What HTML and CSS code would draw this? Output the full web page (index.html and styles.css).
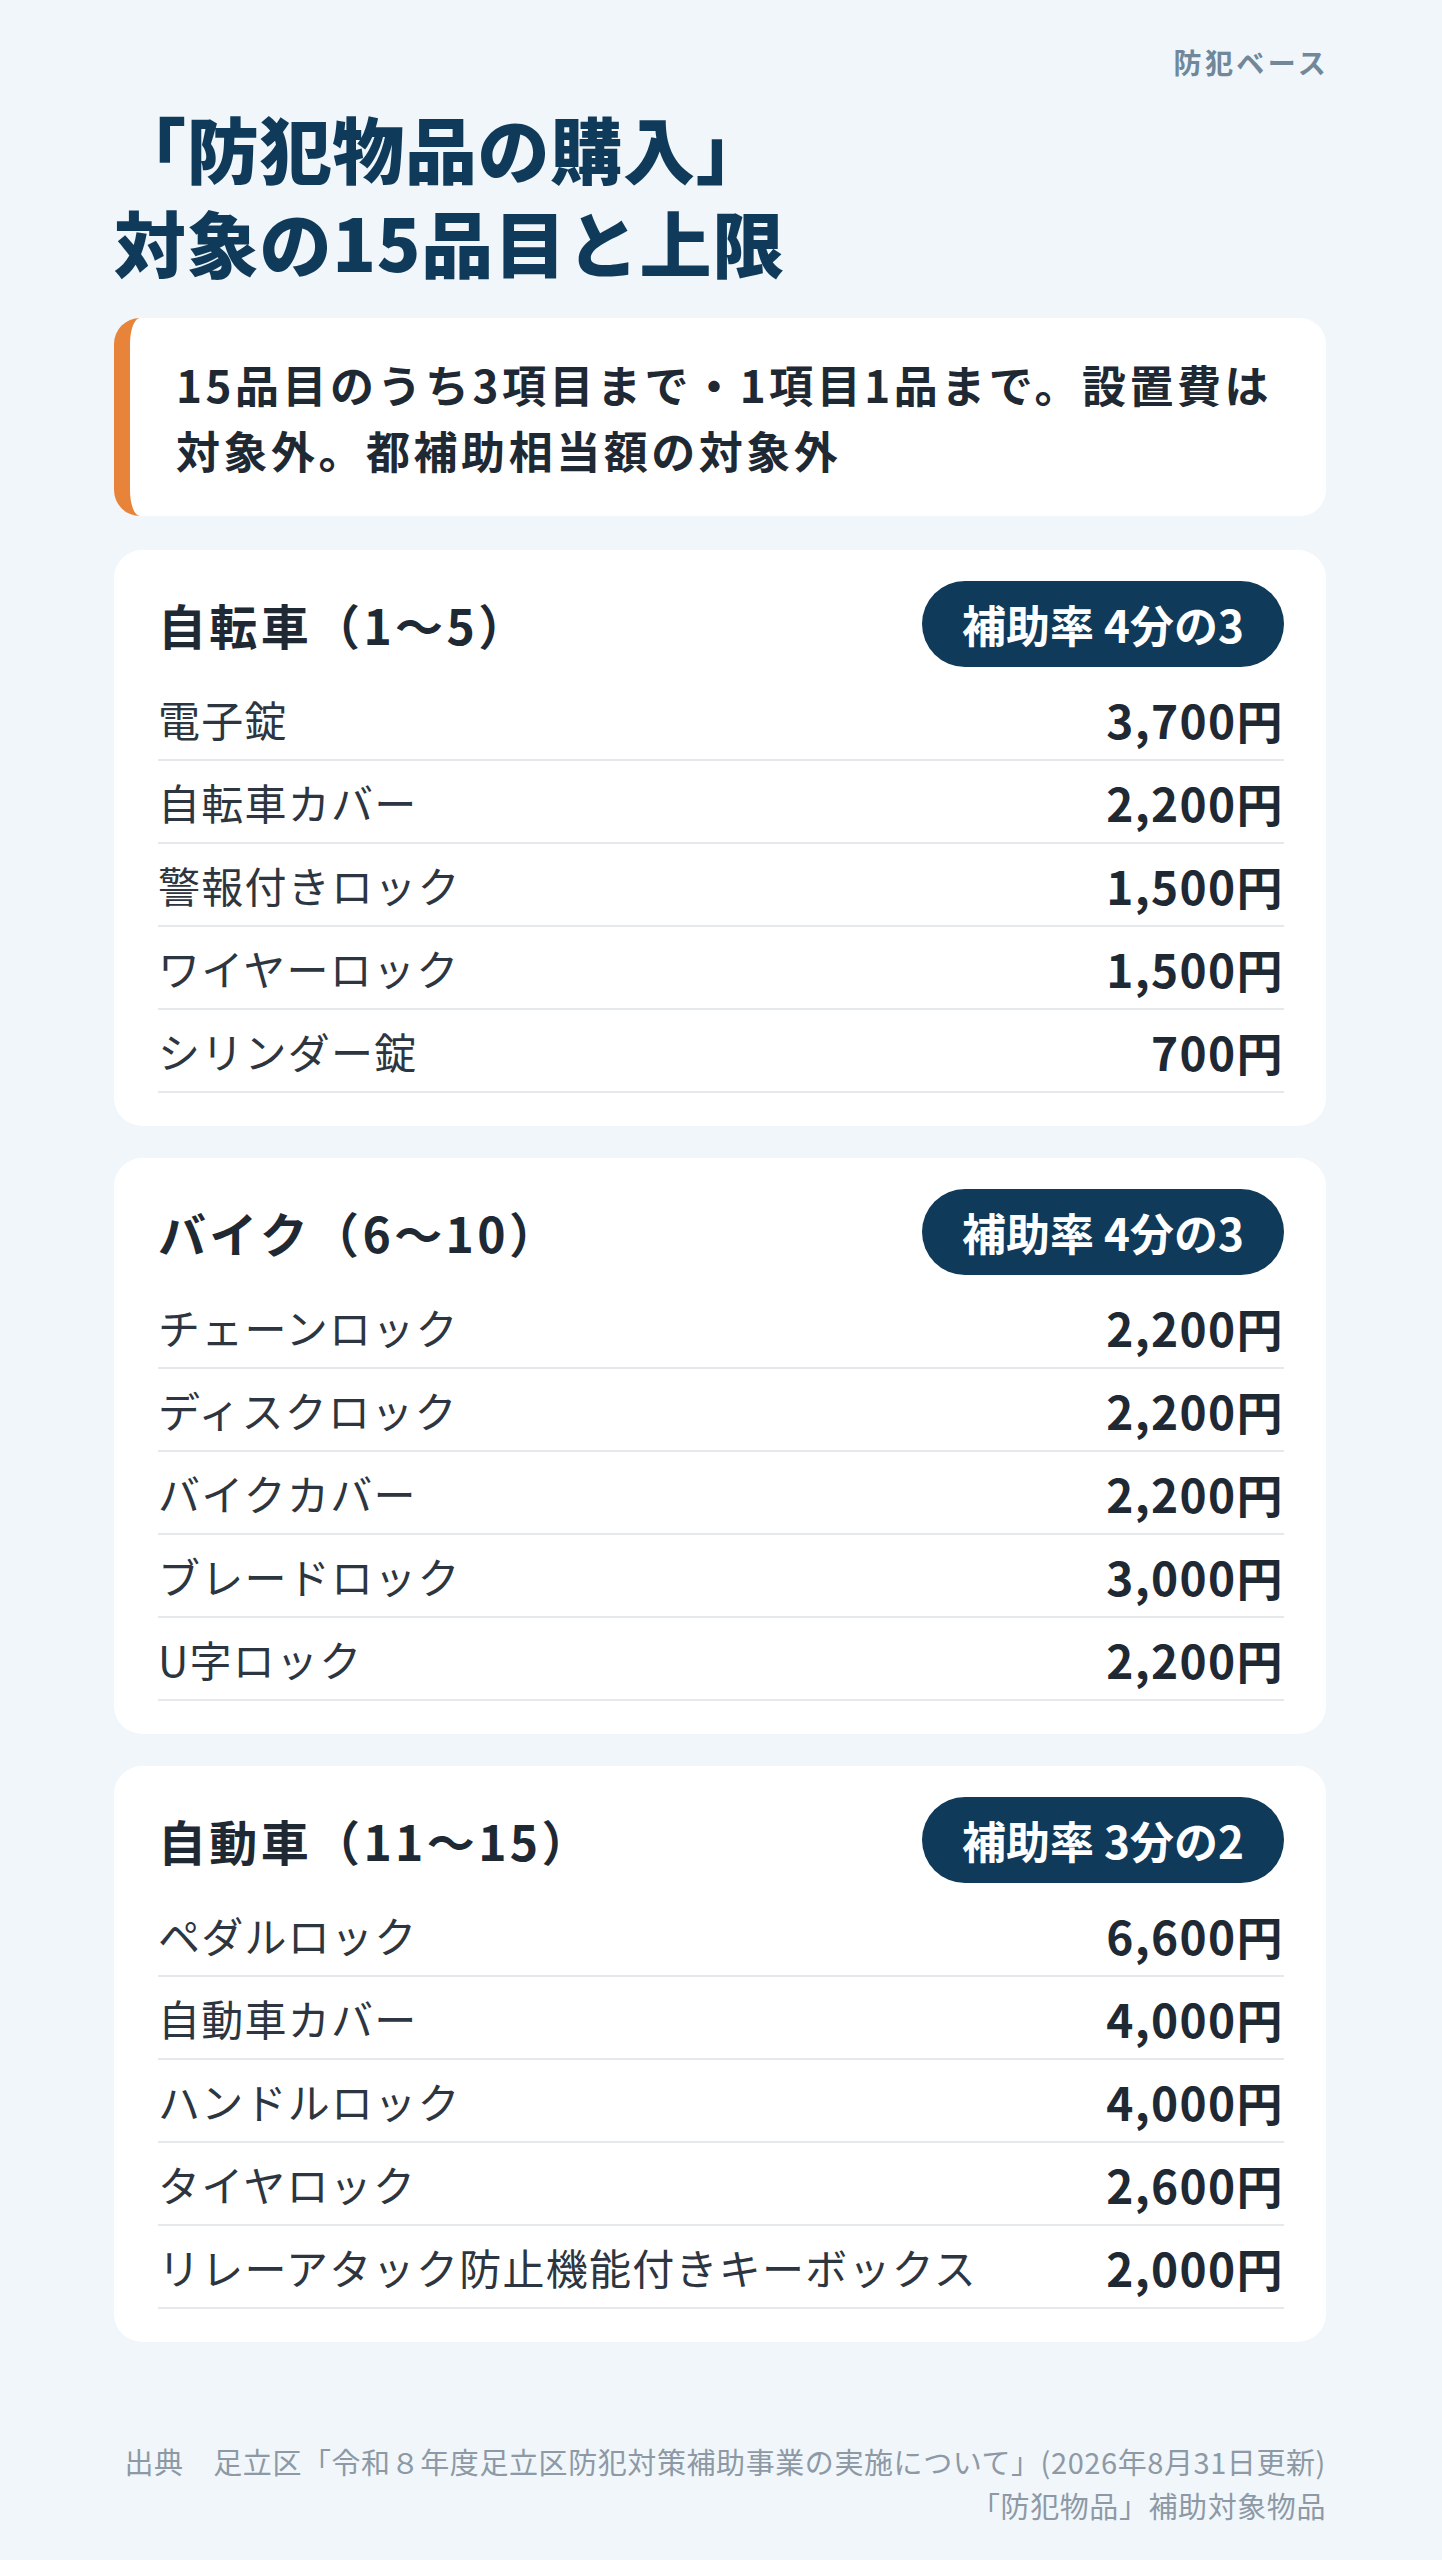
FILE: index.html
```html
<!DOCTYPE html>
<html lang="ja">
<head>
  <meta charset="UTF-8">
  <title>防犯ベース - 防犯物品の購入</title>
  <link rel="stylesheet" href="styles.css">
</head>
<body>

<div class="page">
  <div class="brand">防犯ベース</div>

  <h1 class="title">「防犯物品の購入」<br>対象の15品目と上限</h1>

  <div class="note">
    15品目のうち3項目まで・1項目1品まで。設置費は<br>対象外。都補助相当額の対象外
  </div>

  <div class="card">
    <div class="card-head">
      <h2>自転車（1〜5）</h2>
      <span class="badge">補助率 4分の3</span>
    </div>
    <div class="row"><span class="name">電子錠</span><span class="price">3,700円</span></div>
    <div class="row"><span class="name">自転車カバー</span><span class="price">2,200円</span></div>
    <div class="row"><span class="name">警報付きロック</span><span class="price">1,500円</span></div>
    <div class="row"><span class="name">ワイヤーロック</span><span class="price">1,500円</span></div>
    <div class="row"><span class="name">シリンダー錠</span><span class="price">700円</span></div>
  </div>

  <div class="card">
    <div class="card-head">
      <h2>バイク（6〜10）</h2>
      <span class="badge">補助率 4分の3</span>
    </div>
    <div class="row"><span class="name">チェーンロック</span><span class="price">2,200円</span></div>
    <div class="row"><span class="name">ディスクロック</span><span class="price">2,200円</span></div>
    <div class="row"><span class="name">バイクカバー</span><span class="price">2,200円</span></div>
    <div class="row"><span class="name">ブレードロック</span><span class="price">3,000円</span></div>
    <div class="row"><span class="name">U字ロック</span><span class="price">2,200円</span></div>
  </div>

  <div class="card">
    <div class="card-head">
      <h2>自動車（11〜15）</h2>
      <span class="badge">補助率 3分の2</span>
    </div>
    <div class="row"><span class="name">ペダルロック</span><span class="price">6,600円</span></div>
    <div class="row"><span class="name">自動車カバー</span><span class="price">4,000円</span></div>
    <div class="row"><span class="name">ハンドルロック</span><span class="price">4,000円</span></div>
    <div class="row"><span class="name">タイヤロック</span><span class="price">2,600円</span></div>
    <div class="row"><span class="name">リレーアタック防止機能付きキーボックス</span><span class="price">2,000円</span></div>
  </div>

  <div class="source">
    出典　足立区「令和８年度足立区防犯対策補助事業の実施について」(2026年8月31日更新)<br>
    「防犯物品」補助対象物品
  </div>
</div>

</body>
</html>
```

FILE: styles.css
```css
body {
  margin: 0;
  background: #f0f6fa;
  font-family: "Noto Sans CJK JP", "Noto Sans", sans-serif;
  color: #1f2933;
}

.page {
  padding: 48px 116px 60px 114px;
}

.brand {
  text-align: right;
  font-size: 28px;
  line-height: 28px;
  font-weight: 700;
  letter-spacing: 0.12em;
  margin-right: -3px;
  color: #71879a;
}

.title {
  margin: 24px 0 0;
  font-size: 72px;
  line-height: 94px;
  font-weight: 900;
  letter-spacing: 0.01em;
  color: #0f3a5a;
}

.note {
  margin-top: 30px;
  background: #fff;
  border-left: 16px solid #e8843a;
  border-radius: 26px;
  padding: 33px 20px 33px 46px;
  font-size: 44px;
  line-height: 66px;
  font-weight: 700;
  letter-spacing: 0.08em;
  color: #1f2933;
}

.card {
  margin-top: 32px;
  background: #fff;
  border-radius: 28px;
  padding: 31px 42px 33px 44px;
}

.note + .card {
  margin-top: 34px;
}

.card-head {
  display: flex;
  justify-content: space-between;
  align-items: center;
  margin-bottom: 11px;
}

.card-head h2 {
  margin: 0;
  font-size: 48px;
  font-weight: 700;
  letter-spacing: 0.07em;
  color: #1f2933;
}

.badge {
  display: flex;
  align-items: center;
  height: 86px;
  padding: 0 40px;
  border-radius: 43px;
  background: #0f3a5a;
  color: #fff;
  font-size: 44px;
  font-weight: 700;
}

.row {
  display: flex;
  justify-content: space-between;
  align-items: center;
  height: 81px;
  border-bottom: 2px solid #e6e9ec;
}

.name {
  font-size: 42px;
  letter-spacing: 0.03em;
  color: #2d3640;
}

.price {
  font-size: 46px;
  font-weight: 700;
  letter-spacing: 0.03em;
  color: #1f2933;
}

.source {
  margin-top: 97px;
  text-align: right;
  font-size: 29px;
  line-height: 44px;
  letter-spacing: 0.02em;
  color: #8d99a5;
}
```
